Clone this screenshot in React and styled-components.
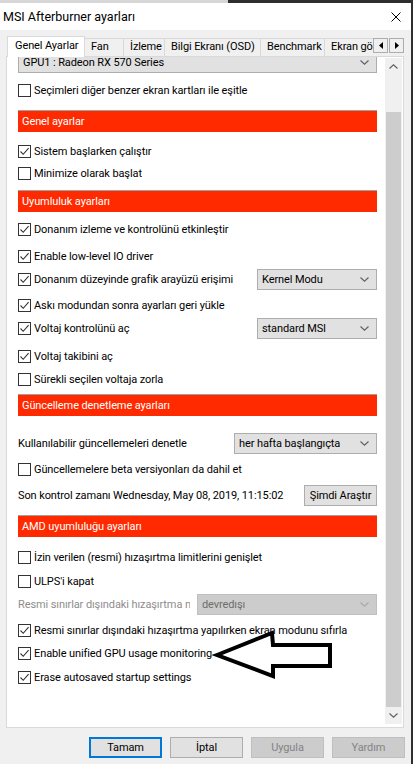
import React from "react";
import styled, { createGlobalStyle } from "styled-components";

const GlobalStyle = createGlobalStyle`
  html, body {
    margin: 0;
    padding: 0;
  }
  body {
    background: #2e2e2e;
    font-family: Roboto, "Liberation Sans", sans-serif;
    font-size: 11px;
    letter-spacing: -0.1px;
    color: #000;
  }
`;

const tabs = [
  { label: "Genel Ayarlar", width: 78, active: true },
  { label: "Fan", width: 40 },
  { label: "İzleme", width: 42 },
  { label: "Bilgi Ekranı (OSD)", width: 97 },
  { label: "Benchmark", width: 65 },
  { label: "Ekran görüntüsü", width: 90 },
];

function Chevron({ up, color = "#606060" }) {
  return (
    <svg width="9" height="5" viewBox="0 0 9 5">
      <polyline
        points={up ? "0.5,4.5 4.5,0.8 8.5,4.5" : "0.5,0.5 4.5,4.2 8.5,0.5"}
        fill="none"
        stroke={color}
        strokeWidth="1.1"
      />
    </svg>
  );
}

function Check({ checked, children }) {
  return (
    <Row>
      <Box>
        {checked && (
          <svg width="11" height="11" viewBox="0 0 11 11">
            <polyline points="1.5,5.5 4.2,8.3 9.6,2.2" fill="none" stroke="#333" strokeWidth="1.1" />
          </svg>
        )}
      </Box>
      <Label>{children}</Label>
    </Row>
  );
}

function Dropdown({ width, disabled, children }) {
  return (
    <Select $width={width} $disabled={disabled}>
      <span>{children}</span>
      <Chevron color={disabled ? "#a8a8a8" : "#606060"} />
    </Select>
  );
}

function App() {
  return (
    <Screen>
      <GlobalStyle />
      <Backdrop />
      <Window>
        <TitleBar>
          <span>MSI Afterburner ayarları</span>
          <svg width="10" height="10" viewBox="0 0 10 10">
            <path d="M0.5 0.5 L9.5 9.5 M9.5 0.5 L0.5 9.5" stroke="#000" strokeWidth="1" />
          </svg>
        </TitleBar>

        <TabRow>
          <TabList>
            {tabs.map((t) => (
              <Tab key={t.label} $width={t.width} $active={t.active}>
                {t.label}
              </Tab>
            ))}
          </TabList>
          <TabArrows>
            <TabArrow>
              <svg width="4" height="7" viewBox="0 0 4 7">
                <polygon points="4,0 0,3.5 4,7" fill="#000" />
              </svg>
            </TabArrow>
            <TabArrow>
              <svg width="4" height="7" viewBox="0 0 4 7">
                <polygon points="0,0 4,3.5 0,7" fill="#000" />
              </svg>
            </TabArrow>
          </TabArrows>
        </TabRow>

        <Panel>
          <Content>
            <Dropdown width="100%">GPU1 : Radeon RX 570 Series</Dropdown>
            <Spacer $h={7} />
            <Check>Seçimleri diğer benzer ekran kartları ile eşitle</Check>
            <Spacer $h={10} />
            <Header>Genel ayarlar</Header>
            <Spacer $h={9} />
            <Check checked>Sistem başlarken çalıştır</Check>
            <Spacer $h={2} />
            <Check>Minimize olarak başlat</Check>
            <Spacer $h={7} />
            <Header>Uyumluluk ayarları</Header>
            <Spacer $h={7} />
            <Check checked>Donanım izleme ve kontrolünü etkinleştir</Check>
            <Spacer $h={7} />
            <Check checked>Enable low-level IO driver</Check>
            <Spacer $h={3} />
            <FieldRow>
              <Check checked>Donanım düzeyinde grafik arayüzü erişimi</Check>
              <Dropdown width={120}>Kernel Modu</Dropdown>
            </FieldRow>
            <Spacer $h={5} />
            <Check checked>Askı modundan sonra ayarları geri yükle</Check>
            <Spacer $h={3} />
            <FieldRow>
              <Check checked>Voltaj kontrolünü aç</Check>
              <Dropdown width={120}>standard MSI</Dropdown>
            </FieldRow>
            <Spacer $h={7} />
            <Check checked>Voltaj takibini aç</Check>
            <Spacer $h={3} />
            <Check>Sürekli seçilen voltaja zorla</Check>
            <Spacer $h={5} />
            <Header>Güncelleme denetleme ayarları</Header>
            <Spacer $h={17} />
            <FieldRow>
              <Label>Kullanılabilir güncellemeleri denetle</Label>
              <Dropdown width={143}>her hafta başlangıçta</Dropdown>
            </FieldRow>
            <Spacer $h={5} />
            <Check>Güncellemelere beta versiyonları da dahil et</Check>
            <Spacer $h={6} />
            <FieldRow>
              <Label>Son kontrol zamanı Wednesday, May 08, 2019, 11:15:02</Label>
              <SmallButton>Şimdi Araştır</SmallButton>
            </FieldRow>
            <Spacer $h={9} />
            <Header>AMD uyumluluğu ayarları</Header>
            <Spacer $h={10} />
            <Check>İzin verilen (resmi) hızaşırtma limitlerini genişlet</Check>
            <Spacer $h={4} />
            <Check>ULPS'i kapat</Check>
            <Spacer $h={3} />
            <FieldRow>
              <ClippedLabel>
                <Label $disabled>Resmi sınırlar dışındaki hızaşırtma modu</Label>
              </ClippedLabel>
              <Dropdown width={180} disabled>
                devredışı
              </Dropdown>
            </FieldRow>
            <Spacer $h={5} />
            <Check checked>Resmi sınırlar dışındaki hızaşırtma yapılırken ekran modunu sıfırla</Check>
            <Spacer $h={3} />
            <Check checked>Enable unified GPU usage monitoring</Check>
            <Spacer $h={4} />
            <Check checked>Erase autosaved startup settings</Check>
          </Content>
          <ScrollBar>
            <ScrollButton>
              <Chevron up />
            </ScrollButton>
            <Track>
              <Thumb />
            </Track>
            <ScrollButton>
              <Chevron />
            </ScrollButton>
          </ScrollBar>
        </Panel>

        <ButtonRow>
          <DialogButton $primary>Tamam</DialogButton>
          <DialogButton>İptal</DialogButton>
          <DialogButton $disabled>Uygula</DialogButton>
          <DialogButton $disabled>Yardım</DialogButton>
        </ButtonRow>
      </Window>

      <PointerArrow width="124" height="54" viewBox="0 0 124 54">
        <polygon
          points="5,27 60,5 61,17 118,17 118,38 61,38 61,48"
          fill="none"
          stroke="#000"
          strokeWidth="4"
          strokeLinejoin="miter"
        />
      </PointerArrow>
    </Screen>
  );
}

const Screen = styled.div`
  position: relative;
  width: 413px;
  height: 764px;
  overflow: hidden;
  display: flex;
  flex-direction: column;
`;

const Backdrop = styled.div`
  height: 3px;
  flex-shrink: 0;
  background: linear-gradient(to right, #d6d6d6 0 228px, #2e2e2e 228px);
`;

const Window = styled.div`
  flex: 1;
  display: flex;
  flex-direction: column;
  width: 411px;
  background: #f0f0f0;
`;

const TitleBar = styled.div`
  height: 27px;
  flex-shrink: 0;
  background: #fff;
  display: flex;
  align-items: center;
  justify-content: space-between;
  padding: 0 10px 0 3px;
  font-size: 12.5px;
  letter-spacing: 0;
`;

const TabRow = styled.div`
  position: relative;
  z-index: 1;
  display: flex;
  height: 21px;
  margin-top: 6px;
  padding: 0 7px;
`;

const TabList = styled.div`
  flex: 1;
  display: flex;
  align-items: flex-end;
  overflow: hidden;
`;

const Tab = styled.div`
  flex-shrink: 0;
  box-sizing: border-box;
  width: ${(p) => p.$width}px;
  height: ${(p) => (p.$active ? 21 : 18)}px;
  margin-bottom: ${(p) => (p.$active ? 0 : 1)}px;
  margin-left: ${(p) => (p.$active ? 0 : -1)}px;
  padding: ${(p) => (p.$active ? "2px 0 0 7px" : "1px 0 0 6px")};
  background: ${(p) => (p.$active ? "#fff" : "#f0f0f0")};
  border: 1px solid #d9d9d9;
  border-bottom: none;
  white-space: nowrap;
  overflow: hidden;
  line-height: 14px;
  &:first-child {
    margin-left: 0;
  }
`;

const TabArrows = styled.div`
  display: flex;
  margin-top: 2px;
  height: 15px;
`;

const TabArrow = styled.div`
  width: 15px;
  height: 15px;
  box-sizing: border-box;
  border: 1px solid #adadad;
  background: #f0f0f0;
  display: flex;
  align-items: center;
  justify-content: center;
  & + & {
    margin-left: 1px;
  }
`;

const Panel = styled.div`
  margin: -1px 7px 0 6px;
  height: 672px;
  box-sizing: border-box;
  border: 1px solid #d9d9d9;
  background: #fff;
  padding: 0 1px 3px 0;
  display: flex;
`;

const Content = styled.div`
  flex: 1;
  overflow: hidden;
  padding: 0 8px 0 11px;
  display: flex;
  flex-direction: column;
  & > :first-child {
    margin-top: -5px;
  }
`;

const Spacer = styled.div`
  flex-shrink: 0;
  height: ${(p) => p.$h}px;
`;

const Row = styled.div`
  display: flex;
  align-items: center;
  height: 20px;
  flex-shrink: 0;
`;

const FieldRow = styled.div`
  display: flex;
  align-items: center;
  justify-content: space-between;
  height: 21px;
  flex-shrink: 0;
`;

const Box = styled.div`
  width: 13px;
  height: 13px;
  box-sizing: border-box;
  border: 1px solid #333;
  background: #fff;
  margin-right: 3px;
  flex-shrink: 0;
  display: flex;
  align-items: center;
  justify-content: center;
`;

const Label = styled.span`
  white-space: nowrap;
  color: ${(p) => (p.$disabled ? "#8d8d8d" : "#000")};
`;

const ClippedLabel = styled.div`
  width: 172px;
  overflow: hidden;
  flex-shrink: 0;
`;

const Select = styled.div`
  box-sizing: border-box;
  width: ${(p) => (typeof p.$width === "number" ? `${p.$width}px` : p.$width)};
  height: 21px;
  flex-shrink: 0;
  border: 1px solid ${(p) => (p.$disabled ? "#bfbfbf" : "#adadad")};
  background: ${(p) => (p.$disabled ? "#cccccc" : "#e1e1e1")};
  color: ${(p) => (p.$disabled ? "#6d6d6d" : "#000")};
  display: flex;
  align-items: center;
  justify-content: space-between;
  padding: 0 7px 0 4px;
`;

const Header = styled.div`
  height: 22px;
  box-sizing: border-box;
  flex-shrink: 0;
  background: #ff2a00;
  border-top: 1px solid #a0a0a0;
  color: #fff;
  display: flex;
  align-items: center;
  padding-left: 4px;
`;

const SmallButton = styled.div`
  box-sizing: border-box;
  width: 73px;
  height: 21px;
  border: 1px solid #adadad;
  background: #e1e1e1;
  display: flex;
  align-items: center;
  justify-content: center;
`;

const ScrollBar = styled.div`
  width: 17px;
  flex-shrink: 0;
  background: #f0f0f0;
  display: flex;
  flex-direction: column;
  margin-top: 1px;
`;

const ScrollButton = styled.div`
  height: 17px;
  display: flex;
  align-items: center;
  justify-content: center;
  flex-shrink: 0;
`;

const Track = styled.div`
  flex: 1;
  display: flex;
  flex-direction: column;
  padding: 0 1px;
`;

const Thumb = styled.div`
  margin-top: 37px;
  flex: 1;
  background: #cdcdcd;
`;

const ButtonRow = styled.div`
  display: flex;
  justify-content: flex-end;
  gap: 8px;
  margin-top: 9px;
  padding-right: 6px;
`;

const DialogButton = styled.div`
  box-sizing: border-box;
  width: 73px;
  height: 21px;
  display: flex;
  align-items: center;
  justify-content: center;
  background: ${(p) => (p.$disabled ? "#cccccc" : "#e1e1e1")};
  border: ${(p) =>
    p.$primary ? "2px solid #0078d7" : `1px solid ${p.$disabled ? "#bfbfbf" : "#adadad"}`};
  color: ${(p) => (p.$disabled ? "#838383" : "#000")};
`;

const PointerArrow = styled.svg`
  position: absolute;
  left: 212px;
  top: 628px;
`;

export default App;
